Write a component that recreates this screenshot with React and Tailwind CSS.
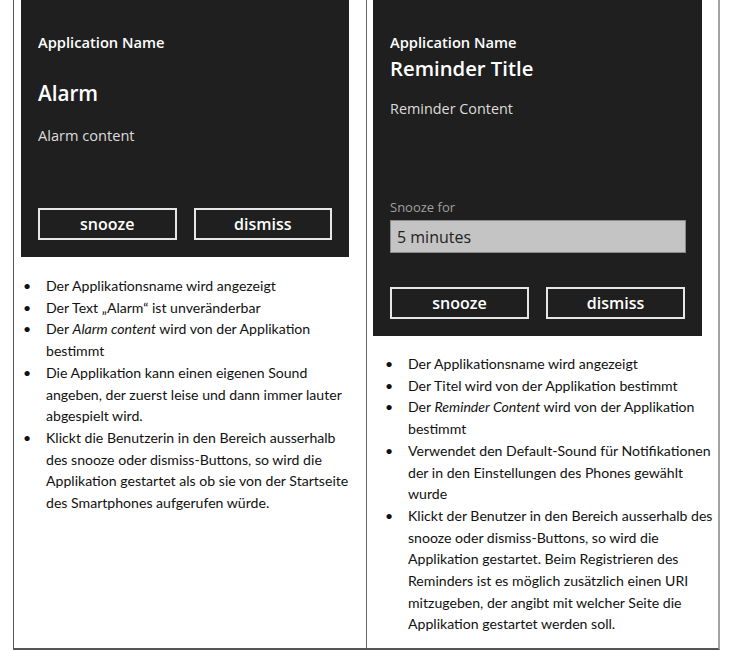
import React from 'react';

const phoneFont = { fontFamily: '"Open Sans", "Noto Sans", sans-serif' };
const docFont = { fontFamily: 'Lato, "Liberation Sans", sans-serif' };

const PhoneButtons = () => (
    <div className="grid grid-cols-2 gap-[17px]">
        {['snooze', 'dismiss'].map(label => (
            <div
                key={label}
                className="h-[32px] border-2 border-[#e6e6e6] flex items-center justify-center text-white text-[16px] font-semibold leading-none"
            >
                {label}
            </div>
        ))}
    </div>
);

// each item is a list of lines, broken as in the original document
const Bullets = ({ items }) => (
    <ul className="text-[14.1px] leading-[21.7px] text-[#111]" style={docFont}>
        {items.map((lines, i) => (
            <li key={i} className="flex">
                <span className="w-[23px] shrink-0">•</span>
                <div className="whitespace-nowrap">
                    {lines.map((line, j) => (
                        <div key={j}>{line}</div>
                    ))}
                </div>
            </li>
        ))}
    </ul>
);

const alarmItems = [
    ['Der Applikationsname wird angezeigt'],
    ['Der Text „Alarm“ ist unveränderbar'],
    [<span key="a">Der <i>Alarm content</i> wird von der Applikation</span>, 'bestimmt'],
    ['Die Applikation kann einen eigenen Sound', 'angeben, der zuerst leise und dann immer lauter', 'abgespielt wird.'],
    [
        'Klickt die Benutzerin in den Bereich ausserhalb',
        'des snooze oder dismiss-Buttons, so wird die',
        'Applikation gestartet als ob sie von der Startseite',
        'des Smartphones aufgerufen würde.'
    ]
];

const reminderItems = [
    ['Der Applikationsname wird angezeigt'],
    ['Der Titel wird von der Applikation bestimmt'],
    [<span key="r">Der <i>Reminder Content</i> wird von der Applikation</span>, 'bestimmt'],
    ['Verwendet den Default-Sound für Notifikationen', 'der in den Einstellungen des Phones gewählt', 'wurde'],
    [
        'Klickt der Benutzer in den Bereich ausserhalb des',
        'snooze oder dismiss-Buttons, so wird die',
        'Applikation gestartet. Beim Registrieren des',
        'Reminders ist es möglich zusätzlich einen URI',
        'mitzugeben, der angibt mit welcher Seite die',
        'Applikation gestartet werden soll.'
    ]
];

export default function App() {
    return (
        <div className="w-[737px] h-[651px] bg-white">
            <div className="ml-[13px] w-[707px] h-[650px] grid grid-cols-[353px_1fr] border-l border-l-[#555] border-b-2 border-b-[#555] border-r-2 border-r-[#a3a3a3]">
                {/* Alarm column */}
                <div className="border-r border-r-[#666] pl-[7px]">
                    <div className="w-[328px] h-[257px] bg-[#1f1f1f] flex flex-col pt-[32px] px-[17px] pb-[17px]" style={phoneFont}>
                        <div className="text-[14.7px] leading-[20px] font-semibold text-white">Application Name</div>
                        <div className="mt-[26px] text-[20.7px] leading-[30px] font-semibold text-white">Alarm</div>
                        <div className="mt-[17px] text-[14.6px] leading-[20px] text-[#dcdcdc]">Alarm content</div>
                        <div className="mt-auto">
                            <PhoneButtons />
                        </div>
                    </div>
                    <div className="mt-[18px] pl-[2px]">
                        <Bullets items={alarmItems} />
                    </div>
                </div>

                {/* Reminder column */}
                <div className="pl-[6px]">
                    <div className="w-[329px] h-[336px] bg-[#1f1f1f] flex flex-col pt-[32px] pl-[17px] pr-[16px] pb-[17px]" style={phoneFont}>
                        <div className="text-[14.7px] leading-[20px] font-semibold text-white">Application Name</div>
                        <div className="mt-[2px] text-[20.3px] leading-[28px] font-semibold text-white">Reminder Title</div>
                        <div className="mt-[17px] text-[14.4px] leading-[20px] text-[#dcdcdc]">Reminder Content</div>
                        <div className="mt-auto text-[13px] leading-[18px] text-[#a0a0a0]">Snooze for</div>
                        <div className="mt-[4px] h-[33px] bg-[#c4c4c4] border border-[#8a8a8a] flex items-center pl-[6px] text-[16px] text-[#222]">
                            5 minutes
                        </div>
                        <div className="mt-[34px] pr-[1px]">
                            <PhoneButtons />
                        </div>
                    </div>
                    <div className="mt-[17px] pl-[12px]">
                        <Bullets items={reminderItems} />
                    </div>
                </div>
            </div>
        </div>
    );
}
